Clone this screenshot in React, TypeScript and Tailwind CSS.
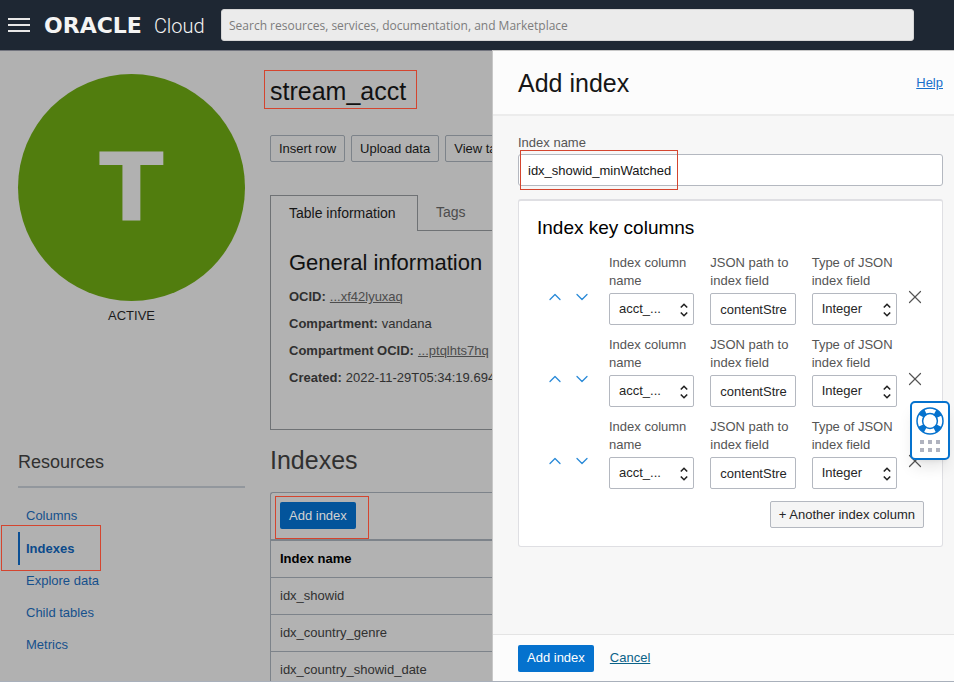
import { ChevronDown, ChevronUp, X } from "lucide-react";

const resources = ["Columns", "Indexes", "Explore data", "Child tables", "Metrics"];
const indexes = ["idx_showid", "idx_country_genre", "idx_country_showid_date"];
const keyColumns = [1, 2, 3];

function Header() {
  return (
    <header className="flex h-[50px] shrink-0 items-center bg-[#1e2733] pr-10 pl-2">
      <button type="button" aria-label="Menu" className="flex w-[22px] flex-col gap-1">
        <span className="h-0.5 bg-[#e8e8e8]" />
        <span className="h-0.5 bg-[#e8e8e8]" />
        <span className="h-0.5 bg-[#e8e8e8]" />
      </button>
      <div className="ml-[14px] flex w-[163px] items-baseline gap-3 pt-0.5 text-[#f4f4f4]">
        <span className="font-['DejaVu_Sans',sans-serif] text-[22px] leading-6 font-bold">ORACLE</span>
        <span className="font-[Roboto,sans-serif] text-[20px] leading-6 font-light">Cloud</span>
      </div>
      <input
        type="search"
        aria-label="Search"
        placeholder="Search resources, services, documentation, and Marketplace"
        className="ml-[14px] h-8 min-w-0 flex-1 rounded-[3px] border border-[#d6d6d6] bg-[#ebebeb] px-[7px] font-['Open_Sans',sans-serif] text-[12px] placeholder:text-[#7c7c7c]"
      />
    </header>
  );
}

function Sidebar() {
  return (
    <aside className="w-[227px] shrink-0">
      <div className="flex h-[227px] items-center justify-center rounded-full bg-[#517d0e] pt-0.5 font-['DejaVu_Sans',sans-serif] text-[95px] leading-none font-bold text-[#b1b1b1]">
        T
      </div>
      <p className="mt-[5px] text-center leading-5 text-[#1c1c1c]">ACTIVE</p>
      <h2 className="mt-[124px] text-[18px] leading-6 text-[#303030]">Resources</h2>
      <nav className="mt-3 border-t-2 border-[#92979d] pt-3">
        {resources.map((item) =>
          item === "Indexes" ? (
            <a
              key={item}
              href="#indexes"
              className="relative flex h-[33px] items-center border-l-2 border-[#0b4f94] pl-[6px] font-bold text-[#0b4a8b]"
            >
              {item}
              <span className="absolute -top-[7px] -left-[19px] h-[46px] w-[100px] border border-[#d4452f]" />
            </a>
          ) : (
            <a key={item} href="#resource" className="flex h-8 items-center pl-2 text-[#15508c]">
              {item}
            </a>
          ),
        )}
      </nav>
    </aside>
  );
}

function Detail() {
  const action =
    "h-[27px] shrink-0 rounded-[2px] border border-[#7d838a] px-2 whitespace-nowrap text-[#161616]";
  return (
    <main className="min-w-0 flex-1 text-[#303030]">
      <h1 className="relative h-[34px] text-[25px] leading-[34px] text-[#111111]">
        stream_acct
        <span className="absolute -top-1 -left-[6px] h-[39px] w-[153px] border border-[#d4452f]" />
      </h1>
      <div className="mt-[27px] flex gap-[6px]">
        <button type="button" className={action}>Insert row</button>
        <button type="button" className={action}>Upload data</button>
        <button type="button" className={action}>View table details</button>
      </div>

      <section className="mt-[33px]">
        <div className="flex">
          <button
            type="button"
            className="h-9 w-[148px] shrink-0 border-t border-r border-l border-[#6f7275] bg-[#b2b2b2] pl-[18px] text-left text-[14px] text-[#161616]"
          >
            Table information
          </button>
          <button type="button" className="h-9 flex-1 border-b border-[#6f7275] pl-[18px] text-left text-[14px] text-[#4c4c4c]">
            Tags
          </button>
        </div>
        <div className="h-[199px] border-b border-l border-[#6f7275] bg-[#b2b2b2] pl-[18px] whitespace-nowrap">
          <h2 className="pt-[18px] text-[22px] leading-7 text-[#111111]">General information</h2>
          <dl className="mt-[6px] leading-[27px]">
            <div className="flex gap-1">
              <dt className="font-bold">OCID:</dt>
              <dd><a href="#ocid" className="text-[#4c4c4c] underline">...xf42lyuxaq</a></dd>
            </div>
            <div className="flex gap-1">
              <dt className="font-bold">Compartment:</dt>
              <dd>vandana</dd>
            </div>
            <div className="flex gap-1">
              <dt className="font-bold">Compartment OCID:</dt>
              <dd><a href="#compartment" className="text-[#4c4c4c] underline">...ptqlhts7hq</a></dd>
            </div>
            <div className="flex gap-1">
              <dt className="font-bold">Created:</dt>
              <dd>2022-11-29T05:34:19.694Z</dd>
            </div>
          </dl>
        </div>
      </section>

      <h2 className="mt-[14px] text-[25px] leading-8 text-[#303030]">Indexes</h2>
      <div className="mt-4 rounded-tl-[3px] border-t border-l border-[#7d838a] bg-[#b2b2b2]">
        <div className="relative h-[46px] pt-[9px] pl-[9px]">
          <button type="button" className="h-[27px] rounded-[2px] bg-[#03549b] px-[9px] text-[#d2d2d2]">
            Add index
          </button>
          <span className="absolute top-[3px] left-1 h-[43px] w-[94px] border border-[#d4452f]" />
        </div>
        <table className="w-full text-left">
          <thead>
            <tr className="h-[37px] border-t-2 border-[#7d838a] text-black">
              <th className="pl-[9px] font-bold">Index name</th>
            </tr>
          </thead>
          <tbody>
            {indexes.map((name) => (
              <tr key={name} className="h-[37px] border-t border-[#7d838a]">
                <td className="pl-[9px]">{name}</td>
              </tr>
            ))}
          </tbody>
        </table>
      </div>
    </main>
  );
}

function PickerArrows() {
  return (
    <svg viewBox="0 0 8 14" className="pointer-events-none absolute top-[10px] right-[6px] h-[14px] w-2" fill="none" stroke="#222222" strokeWidth="1.6">
      <path d="M.8 4.5 4 1.3l3.2 3.2M.8 9.5 4 12.7l3.2-3.2" />
    </svg>
  );
}

function KeyColumnRow({ id }: { id: number }) {
  const label = "block leading-[18px] text-[#555555]";
  const field = "block h-8 w-full rounded-[2px] border border-[#b4b8c0] bg-white text-[#262626]";
  return (
    <div className="-mr-2 flex">
      <div className="flex w-[72px] shrink-0 items-start pt-[33px] pl-1 text-[#2a8ad8]">
        <button type="button" aria-label="Move up" className="flex w-[27px] justify-center">
          <ChevronUp size={20} strokeWidth={1.3} absoluteStrokeWidth />
        </button>
        <button type="button" aria-label="Move down" className="flex w-[27px] justify-center">
          <ChevronDown size={20} strokeWidth={1.3} absoluteStrokeWidth />
        </button>
      </div>
      <div className="grid min-w-0 flex-1 grid-cols-3 gap-4">
        <div>
          <label htmlFor={`name-${id}`} className={label}>Index column name</label>
          <div className="relative mt-[3px]">
            <select id={`name-${id}`} className={`${field} appearance-none pl-[9px]`}>
              <option>acct_...</option>
            </select>
            <PickerArrows />
          </div>
        </div>
        <div>
          <label htmlFor={`path-${id}`} className={label}>JSON path to index field</label>
          <input id={`path-${id}`} defaultValue="contentStre" className={`${field} mt-[3px] pr-1 pl-[9px]`} />
        </div>
        <div>
          <label htmlFor={`type-${id}`} className={label}>Type of JSON index field</label>
          <div className="relative mt-[3px]">
            <select id={`type-${id}`} className={`${field} appearance-none pl-[9px]`}>
              <option>Integer</option>
            </select>
            <PickerArrows />
          </div>
        </div>
      </div>
      <button type="button" aria-label="Remove" className="flex w-[35px] shrink-0 items-start justify-center pt-8 text-[#555555]">
        <X size={22} strokeWidth={1.2} absoluteStrokeWidth />
      </button>
    </div>
  );
}

function Buoy() {
  return (
    <svg viewBox="0 0 28 28" className="size-7" fill="none" stroke="#0572ce">
      <circle cx="14" cy="14" r="10" strokeWidth="6" strokeDasharray="6 9.708" strokeDashoffset="-4.85" />
      <circle cx="14" cy="14" r="13" strokeWidth="1.5" />
      <circle cx="14" cy="14" r="7.4" strokeWidth="1.5" />
    </svg>
  );
}

function AddIndexPanel() {
  return (
    <form className="flex w-[462px] shrink-0 flex-col border-t border-l border-[#c8c8c8] bg-[#f7f7f7]">
      <div className="flex h-[65px] items-center justify-between border-b-2 border-[#ececec] bg-[#fcfcfc] pr-[11px] pl-[25px]">
        <h2 className="text-[25px] leading-8 text-[#161616]">Add index</h2>
        <a href="#help" className="text-[#1a70cc] underline">Help</a>
      </div>
      <div className="flex-1 pt-[17px] pr-[11px] pl-[25px]">
        <label htmlFor="index-name" className="block leading-5 text-[#555555]">Index name</label>
        <div className="relative mt-px">
          <input
            id="index-name"
            defaultValue="idx_showid_minWatched"
            className="block h-8 w-full rounded-[3px] border border-[#b4b8c0] bg-white px-[9px] text-[#161616]"
          />
          <span className="pointer-events-none absolute -top-1 left-[2px] h-10 w-[158px] border border-[#d4452f]" />
        </div>
        <section className="mt-[13px] rounded-[3px] border border-t-2 border-[#dfdfe3] bg-white px-[18px] pt-[13px] pb-[18px]">
          <h3 className="text-[19px] leading-7 text-black">Index key columns</h3>
          <div className="mt-3 flex flex-col gap-[11px]">
            {keyColumns.map((id) => (
              <KeyColumnRow key={id} id={id} />
            ))}
          </div>
          <button
            type="button"
            className="mt-3 ml-auto block h-[27px] rounded-[2px] border border-[#b4b8c0] bg-[#f5f5f5] px-2 whitespace-nowrap text-[#262626]"
          >
            + Another index column
          </button>
        </section>
      </div>
      <div className="flex h-[47px] items-center gap-4 border-t border-[#e4e4e4] bg-[#fcfcfc] pl-[25px]">
        <button type="submit" className="h-[27px] rounded-[2px] bg-[#0572ce] px-[9px] text-white">Add index</button>
        <a href="#cancel" className="text-[#0b6288] underline">Cancel</a>
      </div>
    </form>
  );
}

export default function App() {
  return (
    <div className="flex h-screen flex-col overflow-hidden bg-[#b1b1b1] font-['Liberation_Sans',Arial,sans-serif] text-[13px]">
      <Header />
      <div className="flex min-h-0 flex-1 border-b border-[#a9b0bb]">
        <div className="flex min-w-0 flex-1 gap-[25px] overflow-hidden border-t border-[#73757f] pt-[23px] pl-[18px]">
          <Sidebar />
          <Detail />
        </div>
        <AddIndexPanel />
      </div>
      <button
        type="button"
        aria-label="Support"
        className="fixed top-[401px] right-1 flex h-[59px] w-10 flex-col items-center justify-between rounded-[5px] border-2 border-[#0572ce] bg-white pt-1 pb-[6px] shadow-lg"
      >
        <Buoy />
        <span className="grid grid-cols-3 gap-1">
          {[1, 2, 3, 4, 5, 6].map((dot) => (
            <span key={dot} className="size-1 bg-[#b0b3bf]" />
          ))}
        </span>
      </button>
    </div>
  );
}
